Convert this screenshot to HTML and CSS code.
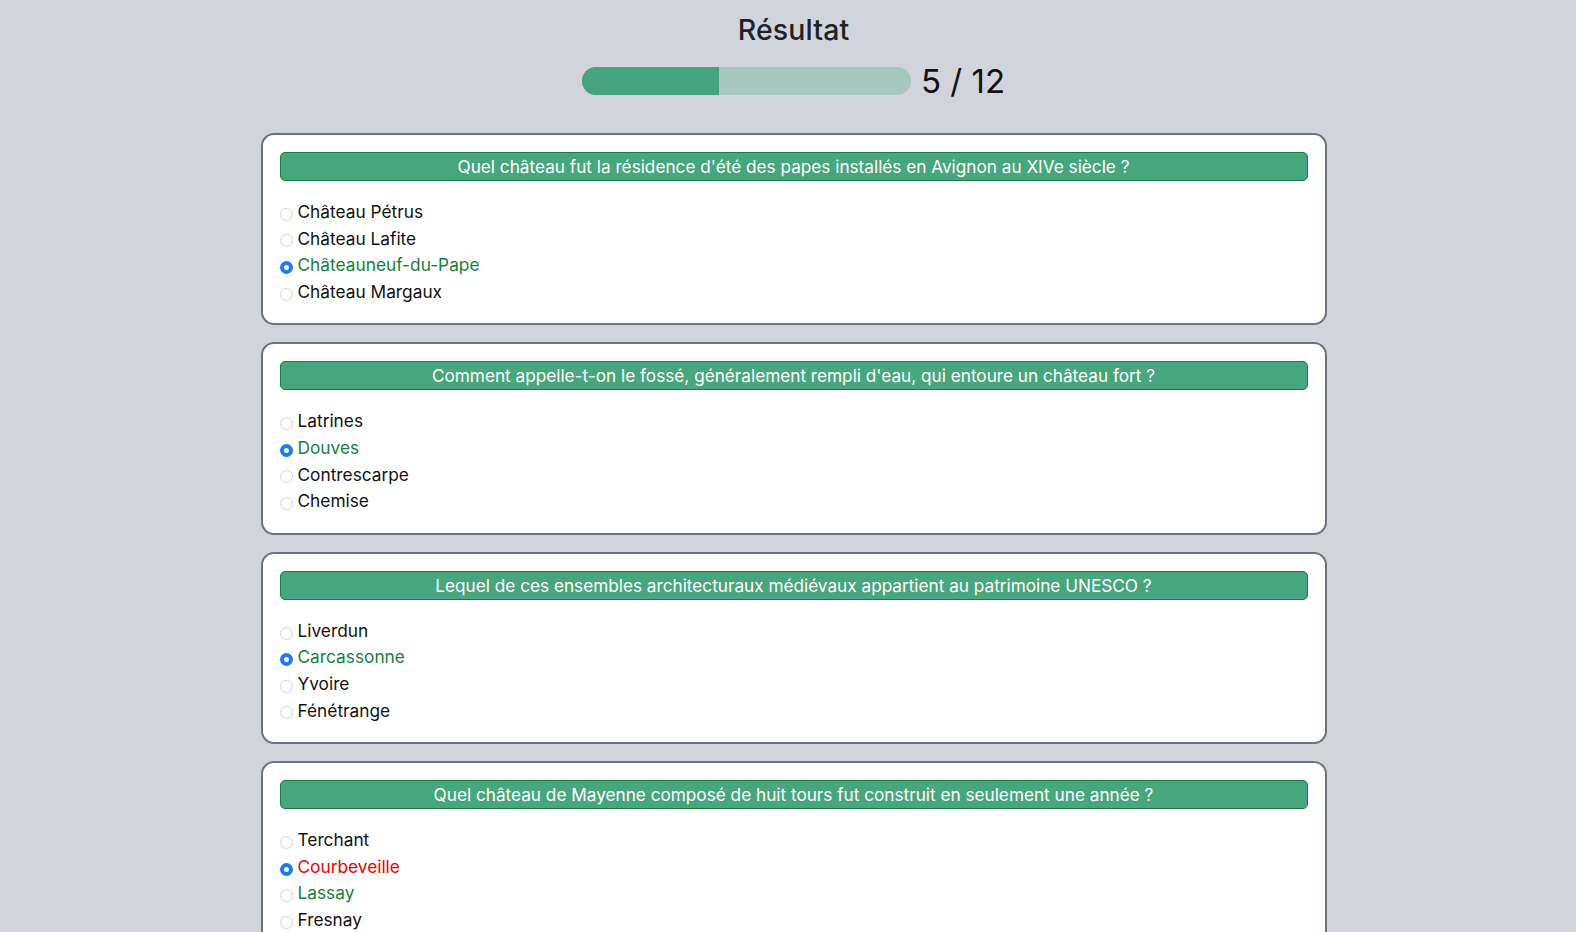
FILE: index.html
```html
<!DOCTYPE html>
<html lang="fr">
<head>
<meta charset="utf-8">
<title>Résultat</title>
<link rel="stylesheet" href="styles.css">
</head>
<body>
<main class="page">
  <h1 class="title">Résultat</h1>
  <div class="score">
    <div class="bar"><div class="fill" style="width:41.667%"></div></div>
    <span class="score-text">5 / 12</span>
  </div>

  <section class="quiz">
    <div class="card">
      <h2 class="question">Quel château fut la résidence d'été des papes installés en Avignon au XIVe siècle ?</h2>
      <ul class="options">
        <li class="option"><span class="radio"></span><span>Château Pétrus</span></li>
        <li class="option"><span class="radio"></span><span>Château Lafite</span></li>
        <li class="option correct"><span class="radio checked"></span><span>Châteauneuf-du-Pape</span></li>
        <li class="option"><span class="radio"></span><span>Château Margaux</span></li>
      </ul>
    </div>

    <div class="card">
      <h2 class="question">Comment appelle-t-on le fossé, généralement rempli d'eau, qui entoure un château fort ?</h2>
      <ul class="options">
        <li class="option"><span class="radio"></span><span>Latrines</span></li>
        <li class="option correct"><span class="radio checked"></span><span>Douves</span></li>
        <li class="option"><span class="radio"></span><span>Contrescarpe</span></li>
        <li class="option"><span class="radio"></span><span>Chemise</span></li>
      </ul>
    </div>

    <div class="card">
      <h2 class="question">Lequel de ces ensembles architecturaux médiévaux appartient au patrimoine UNESCO ?</h2>
      <ul class="options">
        <li class="option"><span class="radio"></span><span>Liverdun</span></li>
        <li class="option correct"><span class="radio checked"></span><span>Carcassonne</span></li>
        <li class="option"><span class="radio"></span><span>Yvoire</span></li>
        <li class="option"><span class="radio"></span><span>Fénétrange</span></li>
      </ul>
    </div>

    <div class="card">
      <h2 class="question">Quel château de Mayenne composé de huit tours fut construit en seulement une année ?</h2>
      <ul class="options">
        <li class="option"><span class="radio"></span><span>Terchant</span></li>
        <li class="option wrong"><span class="radio checked"></span><span>Courbeveille</span></li>
        <li class="option correct"><span class="radio"></span><span>Lassay</span></li>
        <li class="option"><span class="radio"></span><span>Fresnay</span></li>
      </ul>
    </div>
  </section>
</main>
</body>
</html>
```

FILE: styles.css
```css
html {
  scrollbar-width: none;
}
html::-webkit-scrollbar {
  display: none;
}
body {
  margin: 0;
  background: #d1d5db;
  font-family: Inter, "Noto Sans", "Liberation Sans", sans-serif;
  color: #111827;
}
.page {
  display: flex;
  flex-direction: column;
  align-items: center;
  padding: 12px 0 40px 11px;
}
.title {
  margin: 0;
  font-size: 28.5px;
  line-height: 36px;
  font-weight: 500;
  letter-spacing: 0.1px;
  color: #1f2328;
}
.score {
  display: flex;
  align-items: center;
  gap: 10px;
  margin-top: 13px;
}
.bar {
  width: 329px;
  height: 28px;
  border-radius: 14px;
  background: #a6c7bd;
  overflow: hidden;
}
.fill {
  height: 100%;
  background: #47a37f;
}
.score-text {
  font-size: 33px;
  line-height: 40px;
  color: #111;
}
.quiz {
  display: flex;
  flex-direction: column;
  gap: 17px;
  width: 1066px;
  margin-top: 32px;
}
.card {
  background: #fff;
  border: 2px solid #6b7280;
  border-radius: 13px;
  padding: 17px 17px 18px;
}
.question {
  margin: 0;
  background: #47a67e;
  border: 1px solid #15803d;
  border-radius: 5px;
  color: #fff;
  font-size: 17.2px;
  font-weight: 400;
  line-height: 27px;
  text-align: center;
}
.options {
  list-style: none;
  margin: 18px 0 0;
  padding: 0;
}
.option {
  display: flex;
  align-items: center;
  gap: 5px;
  font-size: 17.3px;
  line-height: 26.6px;
  color: #111;
}
.option.correct {
  color: #15803d;
}
.option.wrong {
  color: #ee0000;
}
.radio {
  flex: none;
  box-sizing: border-box;
  width: 13px;
  height: 13px;
  margin-top: 4px;
  border-radius: 50%;
  border: 1px solid #d4d4d4;
  background: #fff;
}
.radio.checked {
  border: 4px solid #1a7cf5;
  background: #fff;
}
```
